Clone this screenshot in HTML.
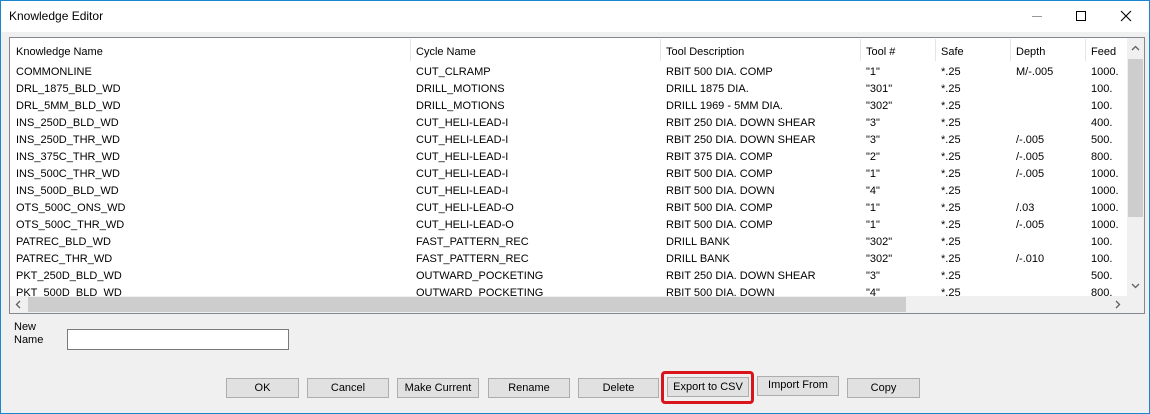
<!DOCTYPE html>
<html><head><meta charset="utf-8"><style>
*{margin:0;padding:0;box-sizing:border-box}
body{width:1150px;height:414px;overflow:hidden;background:#fff;font-family:"Liberation Sans",Arial,sans-serif;font-size:11px;color:#000;position:relative}
.win{position:absolute;left:0;top:0;width:1150px;height:414px;border:1px solid #1a86d0;background:#f0f0f0}
.title{position:absolute;left:0;top:0;width:1148px;height:31px;background:#fff}
.title span{position:absolute;left:8px;top:8px;font-size:12px}
.a{position:absolute;white-space:nowrap}
.list{position:absolute;left:8px;top:36px;width:1136px;height:277px;border:1px solid #828790;background:#fff;overflow:hidden}
.hdr{position:absolute;top:8px;height:14px}
.sep{position:absolute;top:1px;width:1px;height:22px;background:#e5e5e5}
.row{position:absolute;left:0;height:17px;width:1120px}
.row div{position:absolute;top:1px;white-space:nowrap}
.vs{position:absolute;left:1117px;top:0;width:17px;height:258px;background:#f0f0f0}
.hs{position:absolute;left:0;top:258px;width:1134px;height:17px;background:#f0f0f0}
.btn{position:absolute;top:377px;height:20px;border:1px solid #adadad;background:#e1e1e1;text-align:center;line-height:18px}
</style></head><body>
<div class="win">
<div class="title"><span>Knowledge Editor</span>
<div class="a" style="left:1031px;top:15px;width:10px;height:1px;background:#999"></div>
<div class="a" style="left:1075px;top:10px;width:10px;height:10px;border:1px solid #000"></div>
<svg class="a" style="left:1119px;top:9px" width="12" height="12"><path d="M1 1L11 11M11 1L1 11" stroke="#000" stroke-width="1.1"/></svg>
</div>
<div class="list">
<div class="hdr a" style="left:6px">Knowledge Name</div>
<div class="hdr a" style="left:406px">Cycle Name</div>
<div class="hdr a" style="left:656px">Tool Description</div>
<div class="hdr a" style="left:856px">Tool #</div>
<div class="hdr a" style="left:931px">Safe</div>
<div class="hdr a" style="left:1006px">Depth</div>
<div class="hdr a" style="left:1081px">Feed</div>
<div class="sep" style="left:400px"></div><div class="sep" style="left:650px"></div><div class="sep" style="left:850px"></div><div class="sep" style="left:925px"></div><div class="sep" style="left:1000px"></div><div class="sep" style="left:1075px"></div>
<div id="rows"></div>
<div class="vs">
<svg class="a" style="left:4px;top:7px" width="9" height="6"><path d="M1 5L4.5 1.5L8 5" stroke="#606060" stroke-width="1.3" fill="none"/></svg>
<div class="a" style="left:1px;top:21px;width:15px;height:158px;background:#cdcdcd"></div>
<svg class="a" style="left:4px;top:245px" width="9" height="6"><path d="M1 1L4.5 4.5L8 1" stroke="#606060" stroke-width="1.3" fill="none"/></svg>
</div>
<div class="hs">
<svg class="a" style="left:5px;top:4px" width="6" height="9"><path d="M5 1L1.5 4.5L5 8" stroke="#606060" stroke-width="1.3" fill="none"/></svg>
<div class="a" style="left:18px;top:1px;width:878px;height:15px;background:#cdcdcd"></div>
<svg class="a" style="left:1105px;top:4px" width="6" height="9"><path d="M1 1L4.5 4.5L1 8" stroke="#606060" stroke-width="1.3" fill="none"/></svg>
</div>
</div>
<div class="a" style="left:13px;top:320px;line-height:13px">New<br>Name</div>
<div class="a" style="left:66px;top:328px;width:222px;height:21px;border:1px solid #7a7a7a;background:#fff"></div>
<div class="btn" style="left:225px;width:73px">OK</div>
<div class="btn" style="left:306px;width:82px">Cancel</div>
<div class="btn" style="left:396px;width:82px">Make Current</div>
<div class="btn" style="left:487px;width:82px">Rename</div>
<div class="btn" style="left:577px;width:81px">Delete</div>
<div class="a" style="left:660px;top:370px;width:93px;height:33px;border:3px solid #d9141b;border-radius:4px"></div>
<div class="btn" style="left:666px;width:82px;top:376px">Export to CSV</div>
<div class="btn" style="left:756px;width:82px;top:375px;line-height:17px">Import From</div>
<div class="btn" style="left:846px;width:73px">Copy</div>
</div>
<script>
var d=[["COMMONLINE","CUT_CLRAMP","RBIT 500 DIA. COMP",'"1"',"*.25","M/-.005","1000."],
["DRL_1875_BLD_WD","DRILL_MOTIONS","DRILL 1875 DIA.",'"301"',"*.25","","100."],
["DRL_5MM_BLD_WD","DRILL_MOTIONS","DRILL 1969 - 5MM DIA.",'"302"',"*.25","","100."],
["INS_250D_BLD_WD","CUT_HELI-LEAD-I","RBIT 250 DIA. DOWN SHEAR",'"3"',"*.25","","400."],
["INS_250D_THR_WD","CUT_HELI-LEAD-I","RBIT 250 DIA. DOWN SHEAR",'"3"',"*.25","/-.005","500."],
["INS_375C_THR_WD","CUT_HELI-LEAD-I","RBIT 375 DIA. COMP",'"2"',"*.25","/-.005","800."],
["INS_500C_THR_WD","CUT_HELI-LEAD-I","RBIT 500 DIA. COMP",'"1"',"*.25","/-.005","1000."],
["INS_500D_BLD_WD","CUT_HELI-LEAD-I","RBIT 500 DIA. DOWN",'"4"',"*.25","","1000."],
["OTS_500C_ONS_WD","CUT_HELI-LEAD-O","RBIT 500 DIA. COMP",'"1"',"*.25","/.03","1000."],
["OTS_500C_THR_WD","CUT_HELI-LEAD-O","RBIT 500 DIA. COMP",'"1"',"*.25","/-.005","1000."],
["PATREC_BLD_WD","FAST_PATTERN_REC","DRILL BANK",'"302"',"*.25","","100."],
["PATREC_THR_WD","FAST_PATTERN_REC","DRILL BANK",'"302"',"*.25","/-.010","100."],
["PKT_250D_BLD_WD","OUTWARD_POCKETING","RBIT 250 DIA. DOWN SHEAR",'"3"',"*.25","","500."],
["PKT_500D_BLD_WD","OUTWARD_POCKETING","RBIT 500 DIA. DOWN",'"4"',"*.25","","800."]];
var xs=[6,406,656,856,931,1006,1081],h="";
d.forEach(function(r,i){h+='<div class="row" style="top:'+(27+i*17)+'px">';r.forEach(function(c,j){h+='<div style="left:'+xs[j]+'px">'+c+'</div>'});h+='</div>'});
document.getElementById("rows").innerHTML=h;
</script>
</body></html>
